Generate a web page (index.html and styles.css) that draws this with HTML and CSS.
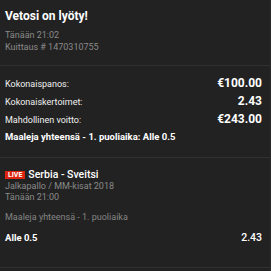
FILE: index.html
```html
<!DOCTYPE html>
<html>
<head>
<meta charset="utf-8">
<link rel="stylesheet" href="styles.css">
</head>
<body>
<div class="slip">
  <section class="head">
    <div class="title">Vetosi on lyöty!</div>
    <div class="meta">Tänään 21:02</div>
    <div class="meta">Kuittaus # 1470310755</div>
  </section>
  <section class="totals">
    <div class="row"><span class="label">Kokonaispanos:</span><span class="val">€100.00</span></div>
    <div class="row"><span class="label">Kokonaiskertoimet:</span><span class="val">2.43</span></div>
    <div class="row"><span class="label">Mahdollinen voitto:</span><span class="val">€243.00</span></div>
    <div class="row strong">Maaleja yhteensä - 1. puoliaika: Alle 0.5</div>
  </section>
  <section class="event">
    <div class="match"><span class="live">LIVE</span><span class="teams">Serbia - Sveitsi</span></div>
    <div class="emeta">Jalkapallo / MM-kisat 2018</div>
    <div class="emeta">Tänään 21:00</div>
    <div class="market">Maaleja yhteensä - 1. puoliaika</div>
    <div class="pick"><span class="sel">Alle 0.5</span><span class="odds">2.43</span></div>
  </section>
</div>
</body>
</html>
```
FILE: styles.css
```css
html, body {
  margin: 0;
  padding: 0;
  background: #222222;
}
body {
  font-family: Roboto, "Liberation Sans", sans-serif;
  color: #ffffff;
  width: 271px;
  height: 271px;
  overflow: hidden;
}
.slip {
  border-right: 1px solid #2a2a2a;
  box-sizing: border-box;
  width: 271px;
  height: 271px;
}
.head {
  padding: 9px 8px 12px 5px;
  border-bottom: 1px solid #303030;
}
.title {
  font-size: 12px;
  font-weight: 700;
  line-height: 14px;
  margin-bottom: 6px;
}
.meta {
  font-size: 9px;
  line-height: 12px;
  color: #8a8a8a;
}
.totals {
  padding: 9.3px 8px 11px 5px;
  border-bottom: 1px solid #303030;
}
.row {
  display: flex;
  justify-content: space-between;
  align-items: baseline;
  font-size: 9px;
  line-height: 17.7px;
  height: 17.7px;
  color: #f0f0f0;
}
.val {
  font-size: 12px;
  font-weight: 700;
  color: #ffffff;
}
.strong {
  font-size: 9.5px;
  font-weight: 700;
  color: #ffffff;
}
.event {
  padding: 10px 8px 22px 5px;
  border-bottom: 1px solid #303030;
}
.match {
  display: flex;
  align-items: center;
  gap: 3px;
  height: 13px;
}
.live {
  background: #dc2410;
  color: #ffffff;
  font-size: 7px;
  font-weight: 700;
  line-height: 8px;
  height: 8px;
  padding: 0 3px;
  display: inline-flex;
  align-items: center;
}
.teams {
  font-size: 10.5px;
  font-weight: 500;
  line-height: 13px;
}
.emeta {
  font-size: 9px;
  line-height: 11px;
  color: #8a8a8a;
}
.market {
  font-size: 9px;
  line-height: 12px;
  color: #858585;
  margin-top: 8px;
}
.pick {
  display: flex;
  justify-content: space-between;
  align-items: baseline;
  margin-top: 8px;
  height: 14px;
  line-height: 14px;
}
.sel {
  font-size: 9.5px;
  font-weight: 700;
}
.odds {
  font-size: 10.5px;
  font-weight: 500;
}
```
